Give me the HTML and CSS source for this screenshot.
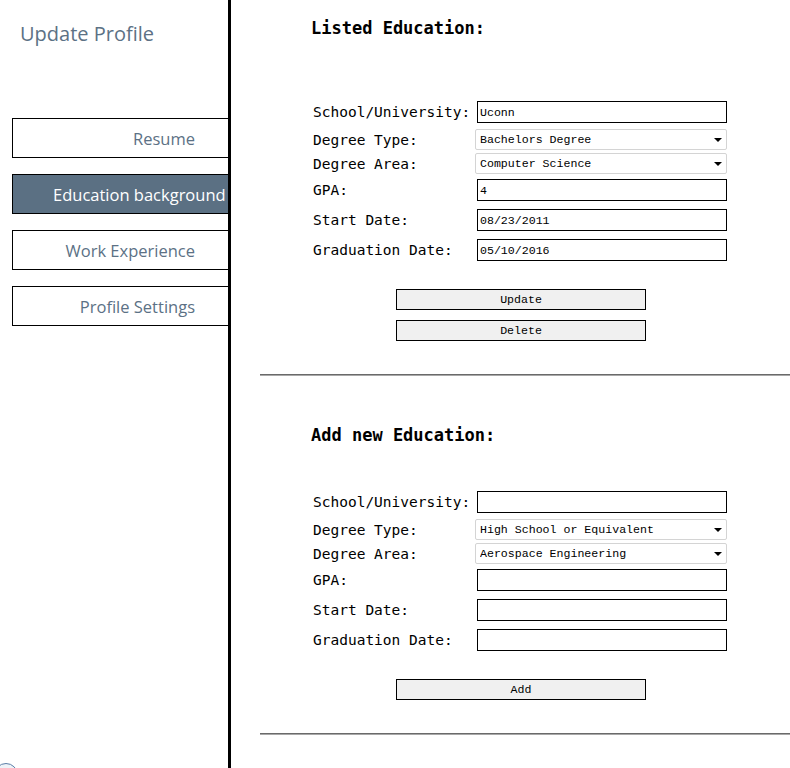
FILE: index.html
```html
<!DOCTYPE html>
<html>
<head>
<meta charset="utf-8">
<link rel="stylesheet" href="styles.css">
</head>
<body>
<aside class="sidebar">
  <div class="brand">Update Profile</div>
  <nav class="nav">
    <a class="nav-item">Resume</a>
    <a class="nav-item active">Education background</a>
    <a class="nav-item">Work Experience</a>
    <a class="nav-item">Profile Settings</a>
  </nav>
  <span class="help-circle"></span>
</aside>
<main class="main">
  <section class="block">
    <h2 class="heading heading-first">Listed Education:</h2>
    <form class="form">
      <div class="row row-input"><label>School/University:</label><input class="field" type="text" value="Uconn"></div>
      <div class="row row-select"><label>Degree Type:</label><span class="select-wrap"><select class="select"><option>Bachelors Degree</option></select></span></div>
      <div class="row row-select"><label>Degree Area:</label><span class="select-wrap"><select class="select"><option>Computer Science</option></select></span></div>
      <div class="row row-input"><label>GPA:</label><input class="field" type="text" value="4"></div>
      <div class="row row-input"><label>Start Date:</label><input class="field" type="text" value="08/23/2011"></div>
      <div class="row row-input"><label>Graduation Date:</label><input class="field" type="text" value="05/10/2016"></div>
      <div class="actions">
        <button type="button" class="btn">Update</button>
        <button type="button" class="btn">Delete</button>
      </div>
    </form>
    <hr class="rule">
  </section>
  <section class="block">
    <h2 class="heading heading-second">Add new Education:</h2>
    <form class="form">
      <div class="row row-input"><label>School/University:</label><input class="field" type="text" value=""></div>
      <div class="row row-select"><label>Degree Type:</label><span class="select-wrap"><select class="select"><option>High School or Equivalent</option></select></span></div>
      <div class="row row-select"><label>Degree Area:</label><span class="select-wrap"><select class="select"><option>Aerospace Engineering</option></select></span></div>
      <div class="row row-input"><label>GPA:</label><input class="field" type="text" value=""></div>
      <div class="row row-input"><label>Start Date:</label><input class="field" type="text" value=""></div>
      <div class="row row-input"><label>Graduation Date:</label><input class="field" type="text" value=""></div>
      <div class="actions">
        <button type="button" class="btn">Add</button>
      </div>
    </form>
    <hr class="rule">
  </section>
</main>
</body>
</html>
```

FILE: styles.css
```css
html, body {
  margin: 0;
  padding: 0;
  background: #fff;
}
body {
  display: flex;
  min-height: 768px;
  overflow: hidden;
}
.sidebar {
  position: relative;
  width: 228px;
  flex: 0 0 228px;
  border-right: 3px solid #000;
  min-height: 768px;
  font-family: "Open Sans", "Noto Sans", sans-serif;
}
.brand {
  margin: 20px 0 0 20px;
  font-size: 20px;
  line-height: 28px;
  color: #5c7185;
}
.nav {
  display: flex;
  flex-direction: column;
  gap: 16px;
  margin-top: 70px;
  margin-left: 12px;
}
.nav-item {
  display: block;
  height: 38px;
  box-sizing: content-box;
  border: 1px solid #000;
  border-right: none;
  padding: 0 33px 0 40px;
  font-size: 16.5px;
  line-height: 39px;
  color: #5c7185;
  text-align: right;
  white-space: nowrap;
}
.nav-item.active {
  background: #5b7083;
  color: #fff;
}
.help-circle {
  position: absolute;
  left: -6px;
  top: 763px;
  width: 22px;
  height: 22px;
  border-radius: 50%;
  border: 1px solid #5b7fa8;
  background: #eef3f8;
}
.main {
  flex: 1;
  padding-left: 29px;
}
.heading {
  font-family: "DejaVu Sans Mono", monospace;
  font-size: 17px;
  font-weight: bold;
  line-height: 20px;
  margin: 0 0 0 51px;
  color: #000;
}
.heading-first {
  margin-top: 18px;
  margin-bottom: 59px;
}
.heading-second {
  margin-top: 49px;
  margin-bottom: 42px;
}
.form {
  display: flex;
  flex-direction: column;
  margin-left: 53px;
  width: 414px;
}
.row {
  display: flex;
  align-items: center;
}
.row label {
  width: 164px;
  flex: 0 0 164px;
  font-family: "DejaVu Sans Mono", monospace;
  font-size: 14.5px;
  color: #000;
  white-space: nowrap;
}
.row-input {
  margin: 4px 0;
}
.row-select {
  margin: 2px 0 1px;
}
.field {
  box-sizing: border-box;
  width: 250px;
  height: 22px;
  border: 1px solid #000;
  margin: 0;
  padding: 0 2px;
  font-family: "Liberation Mono", monospace;
  font-size: 11.6px;
  color: #000;
  background: #fff;
  outline: none;
}
.select-wrap {
  position: relative;
  display: block;
  margin-left: -2px;
  width: 252px;
  height: 21px;
}
.select-wrap::after {
  content: "";
  position: absolute;
  right: 5px;
  top: 9px;
  border-left: 4px solid transparent;
  border-right: 4px solid transparent;
  border-top: 4px solid #000;
  pointer-events: none;
}
.select {
  appearance: none;
  -webkit-appearance: none;
  box-sizing: border-box;
  width: 252px;
  height: 21px;
  margin: 0;
  border: 1px solid #d4d4d4;
  border-radius: 2px;
  background: #fff;
  padding: 0 0 0 4px;
  font-family: "Liberation Mono", monospace;
  font-size: 11.6px;
  color: #000;
  outline: none;
}
.actions {
  display: flex;
  flex-direction: column;
  gap: 10px;
  margin: 24px 0 0 83px;
}
.btn {
  box-sizing: border-box;
  width: 250px;
  height: 21px;
  margin: 0;
  padding: 0;
  border: 1px solid #000;
  background: #f0f0f0;
  font-family: "Liberation Mono", monospace;
  font-size: 11.6px;
  color: #000;
}
.rule {
  margin: 33px 0 0 0;
  height: 0;
  border: none;
  border-top: 1px solid #6a6a6a;
  border-bottom: 1px solid #a8a8a8;
}
```
